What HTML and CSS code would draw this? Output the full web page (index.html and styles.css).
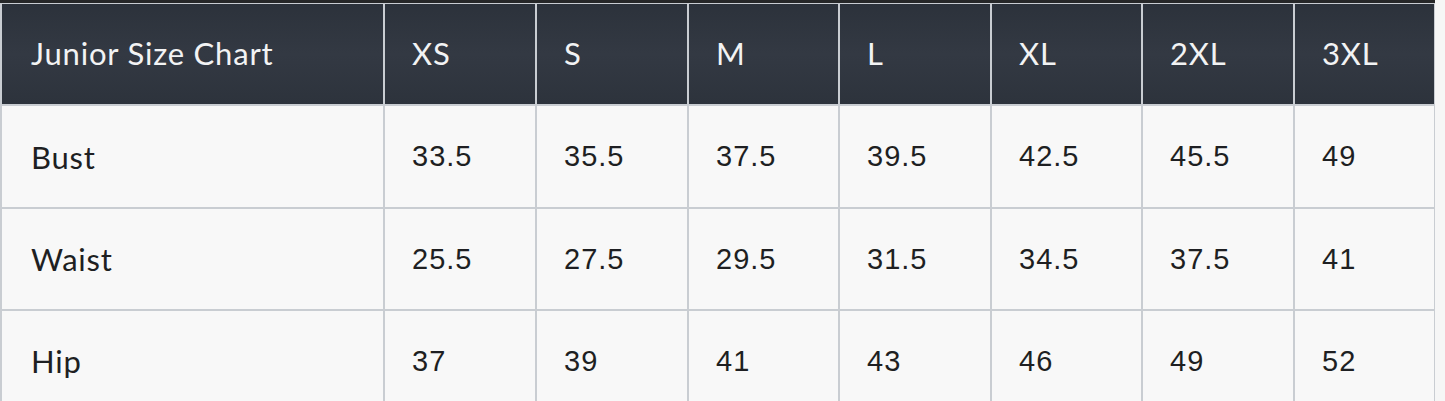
FILE: index.html
```html
<!DOCTYPE html>
<html lang="en">
<head>
<meta charset="utf-8">
<title>Junior Size Chart</title>
<link rel="stylesheet" href="styles.css">
</head>
<body>
<div class="chart">
  <div class="grid">
    <div class="cell head label">Junior Size Chart</div>
    <div class="cell head">XS</div>
    <div class="cell head">S</div>
    <div class="cell head">M</div>
    <div class="cell head">L</div>
    <div class="cell head">XL</div>
    <div class="cell head">2XL</div>
    <div class="cell head">3XL</div>

    <div class="cell label">Bust</div>
    <div class="cell num">33.5</div>
    <div class="cell num">35.5</div>
    <div class="cell num">37.5</div>
    <div class="cell num">39.5</div>
    <div class="cell num">42.5</div>
    <div class="cell num">45.5</div>
    <div class="cell num">49</div>

    <div class="cell label">Waist</div>
    <div class="cell num">25.5</div>
    <div class="cell num">27.5</div>
    <div class="cell num">29.5</div>
    <div class="cell num">31.5</div>
    <div class="cell num">34.5</div>
    <div class="cell num">37.5</div>
    <div class="cell num">41</div>

    <div class="cell label">Hip</div>
    <div class="cell num">37</div>
    <div class="cell num">39</div>
    <div class="cell num">41</div>
    <div class="cell num">43</div>
    <div class="cell num">46</div>
    <div class="cell num">49</div>
    <div class="cell num">52</div>
  </div>
</div>
</body>
</html>
```
FILE: styles.css
```css
html, body {
  margin: 0;
  padding: 0;
  background: #f6f6f6;
  overflow: hidden;
}

.chart {
  width: 1435px;
  border-top: 3px solid #262728;
}

.grid {
  display: grid;
  grid-template-columns: 381px 150px 150px 149px 150px 149px 150px 139px;
  grid-template-rows: 100px 101px 100px 100px;
  gap: 2px;
  padding: 1px 1px 0 2px;
  background: #c9cdd2;
}

.cell {
  display: flex;
  align-items: center;
  padding-left: 27px;
  background: #f8f8f8;
  color: #1e1f22;
  font-family: "Liberation Sans", Arial, sans-serif;
  font-size: 29px;
  letter-spacing: 1px;
}

.cell.head {
  background: linear-gradient(180deg, #2c323b 0%, #333943 50%, #2d333c 100%);
  color: #f2f3f4;
  font-family: Lato, "Open Sans", sans-serif;
  font-size: 31px;
  letter-spacing: 0.8px;
  padding-bottom: 2px;
}

.cell.label {
  font-family: Lato, "Open Sans", sans-serif;
  font-size: 31px;
  letter-spacing: 0.8px;
  padding-left: 29px;
}

.cell.head.label {
  color: #f2f3f4;
}
```
